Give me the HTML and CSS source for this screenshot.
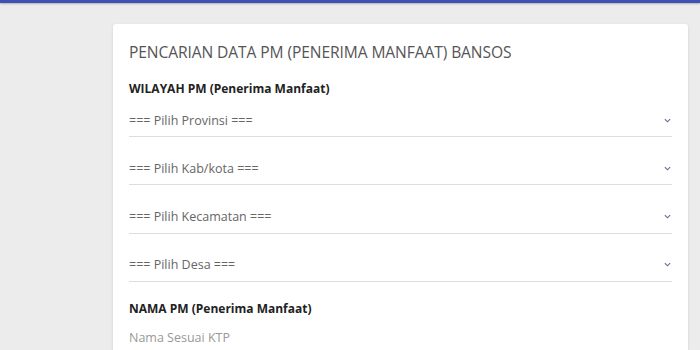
FILE: index.html
```html
<!DOCTYPE html>
<html>
<head>
<meta charset="utf-8">
<link rel="stylesheet" href="styles.css">
</head>
<body>
<div class="topbar"></div>
<main class="page">
  <section class="card">
    <h1 class="title">PENCARIAN DATA PM (PENERIMA MANFAAT) BANSOS</h1>
    <h2 class="label">WILAYAH PM (Penerima Manfaat)</h2>
    <div class="select"><span>=== Pilih Provinsi ===</span><svg class="chev" viewBox="0 0 8 5" width="7" height="5"><path d="M1 1l3 3 3-3" fill="none" stroke="#5a6a8a" stroke-width="1.2"/></svg></div>
    <div class="select"><span>=== Pilih Kab/kota ===</span><svg class="chev" viewBox="0 0 8 5" width="7" height="5"><path d="M1 1l3 3 3-3" fill="none" stroke="#5a6a8a" stroke-width="1.2"/></svg></div>
    <div class="select"><span>=== Pilih Kecamatan ===</span><svg class="chev" viewBox="0 0 8 5" width="7" height="5"><path d="M1 1l3 3 3-3" fill="none" stroke="#5a6a8a" stroke-width="1.2"/></svg></div>
    <div class="select"><span>=== Pilih Desa ===</span><svg class="chev" viewBox="0 0 8 5" width="7" height="5"><path d="M1 1l3 3 3-3" fill="none" stroke="#5a6a8a" stroke-width="1.2"/></svg></div>
    <h2 class="label label-nama">NAMA PM (Penerima Manfaat)</h2>
    <div class="input">Nama Sesuai KTP</div>
  </section>
</main>
</body>
</html>
```
FILE: styles.css
```css
html, body {
  margin: 0;
  padding: 0;
  background: #ececec;
  font-family: "Open Sans", "Noto Sans", sans-serif;
  overflow: hidden;
  height: 350px;
}
.topbar {
  height: 3px;
  background: #3f51b5;
  box-shadow: 0 1px 2px rgba(0,0,0,0.25);
}
.page {
  padding: 21px 12px 0 113px;
}
.card {
  box-sizing: border-box;
  background: #fff;
  border-radius: 3px 3px 0 0;
  box-shadow: 0 1px 3px rgba(0,0,0,0.12);
  padding: 17px 16px 0 16px;
  height: 326px;
  overflow: hidden;
}
.title {
  margin: 0;
  font-size: 15.6px;
  font-weight: 400;
  color: #555;
  line-height: 22px;
  letter-spacing: -0.1px;
}
.label {
  margin: 17px 0 0 0;
  font-size: 12px;
  font-weight: 700;
  color: #222;
  line-height: 18px;
}
.select {
  display: flex;
  align-items: center;
  justify-content: space-between;
  height: 32px;
  margin-top: 6px;
  border-bottom: 1px solid #ddd;
  font-size: 12.5px;
  color: #666;
  padding: 0 1px 0 0;
}
.select + .select {
  margin-top: 15.3px;
}
.label-nama {
  margin-top: 18px;
}
.input {
  margin-top: 11px;
  font-size: 12.5px;
  color: #999;
  line-height: 18px;
}
```
